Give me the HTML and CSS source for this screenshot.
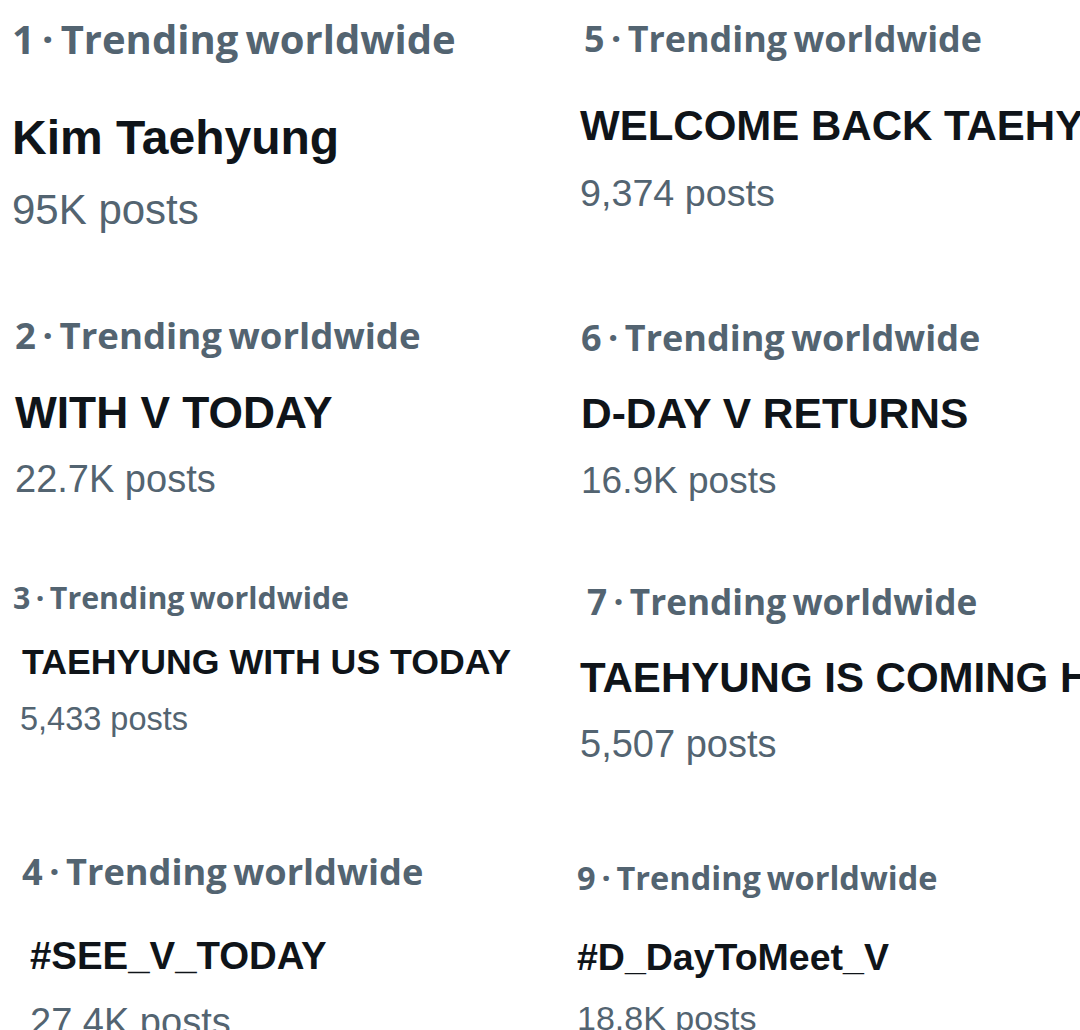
FILE: index.html
```html
<!DOCTYPE html>
<html lang="en">
<head>
    <meta charset="UTF-8">
    <meta name="viewport" content="width=device-width, initial-scale=1.0">
    <title>Trending worldwide</title>
    <link rel="stylesheet" href="styles.css">
</head>
<body>
    <main class="board">
        <!-- left column -->
        <div class="trend trend--1">
            <div class="trend__label">1 · Trending worldwide</div>
            <div class="trend__name">Kim Taehyung</div>
            <div class="trend__count">95K posts</div>
        </div>
        <div class="trend trend--5">
            <div class="trend__label">5 · Trending worldwide</div>
            <div class="trend__name">WELCOME BACK TAEHYUNG</div>
            <div class="trend__count">9,374 posts</div>
        </div>

        <div class="trend trend--2">
            <div class="trend__label">2 · Trending worldwide</div>
            <div class="trend__name">WITH V TODAY</div>
            <div class="trend__count">22.7K posts</div>
        </div>
        <div class="trend trend--6">
            <div class="trend__label">6 · Trending worldwide</div>
            <div class="trend__name">D-DAY V RETURNS</div>
            <div class="trend__count">16.9K posts</div>
        </div>

        <div class="trend trend--3">
            <div class="trend__label">3 · Trending worldwide</div>
            <div class="trend__name">TAEHYUNG WITH US TODAY</div>
            <div class="trend__count">5,433 posts</div>
        </div>
        <div class="trend trend--7">
            <div class="trend__label">7 · Trending worldwide</div>
            <div class="trend__name">TAEHYUNG IS COMING HOME</div>
            <div class="trend__count">5,507 posts</div>
        </div>

        <div class="trend trend--4">
            <div class="trend__label">4 · Trending worldwide</div>
            <div class="trend__name">#SEE_V_TODAY</div>
            <div class="trend__count">27.4K posts</div>
        </div>
        <div class="trend trend--9">
            <div class="trend__label">9 · Trending worldwide</div>
            <div class="trend__name">#D_DayToMeet_V</div>
            <div class="trend__count">18.8K posts</div>
        </div>
    </main>
</body>
</html>
```

FILE: styles.css
```css
/* Collage of trending cards, each one cut from a different screenshot */
body {
    margin: 0;
    background-color: #fff;
    overflow: hidden;
}

.board {
    display: grid;
    grid-template-columns: 560px 520px;
    grid-template-rows: 290px 270px 270px 200px;
    width: 1080px;
    height: 1030px;
    overflow: hidden;
}

.trend {
    overflow: hidden;
    white-space: nowrap;
}

.trend__label {
    font-family: "Open Sans", sans-serif;
    font-weight: 700;
    color: #536471;
    line-height: 1;
    word-spacing: -0.08em;
}

.trend__name {
    font-family: "Liberation Sans", Arial, sans-serif;
    font-weight: 700;
    color: #0f1419;
    line-height: 1;
}

.trend__count {
    font-family: "Liberation Sans", Arial, sans-serif;
    color: #536471;
    line-height: 1;
}

/* 1 */
.trend--1 { padding: 19px 0 0 12px; }
.trend--1 .trend__label { font-size: 40px; }
.trend--1 .trend__name { font-size: 48px; margin-top: 55px; }
.trend--1 .trend__count { font-size: 42px; margin-top: 27px; }

/* 2 */
.trend--2 { padding: 27px 0 0 15px; }
.trend--2 .trend__label { font-size: 36.6px; }
.trend--2 .trend__name { font-size: 44.3px; margin-top: 37px; }
.trend--2 .trend__count { font-size: 38px; margin-top: 25px; }

/* 3 */
.trend--3 { padding: 23px 0 0 13px; }
.trend--3 .trend__label { font-size: 30.3px; }
.trend--3 .trend__name { font-size: 35.7px; margin: 32px 0 0 9px; }
.trend--3 .trend__count { font-size: 32.5px; margin: 22px 0 0 7px; }

/* 4 */
.trend--4 { padding: 23px 0 0 22px; }
.trend--4 .trend__label { font-size: 36.2px; }
.trend--4 .trend__name { font-size: 38.4px; margin: 48px 0 0 8px; }
.trend--4 .trend__count { font-size: 38px; margin: 27px 0 0 8px; }

/* 5 */
.trend--5 { padding: 21px 0 0 20px; }
.trend--5 .trend__label { font-size: 35.9px; margin-left: 4px; }
.trend--5 .trend__name { font-size: 42px; margin-top: 48px; }
.trend--5 .trend__count { font-size: 37.7px; margin-top: 28px; }

/* 6 */
.trend--6 { padding: 30px 0 0 21px; }
.trend--6 .trend__label { font-size: 36px; }
.trend--6 .trend__name { font-size: 42.5px; margin-top: 37px; }
.trend--6 .trend__count { font-size: 37px; margin-top: 26px; }

/* 7 */
.trend--7 { padding: 24px 0 0 20px; }
.trend--7 .trend__label { font-size: 35.2px; margin-left: 7px; }
.trend--7 .trend__name { font-size: 42px; margin-top: 38px; }
.trend--7 .trend__count { font-size: 38px; margin-top: 26px; }

/* 9 */
.trend--9 { padding: 32px 0 0 17px; }
.trend--9 .trend__label { font-size: 32.5px; }
.trend--9 .trend__name { font-size: 37.5px; margin-top: 44px; }
.trend--9 .trend__count { font-size: 34px; margin-top: 25px; }
```
